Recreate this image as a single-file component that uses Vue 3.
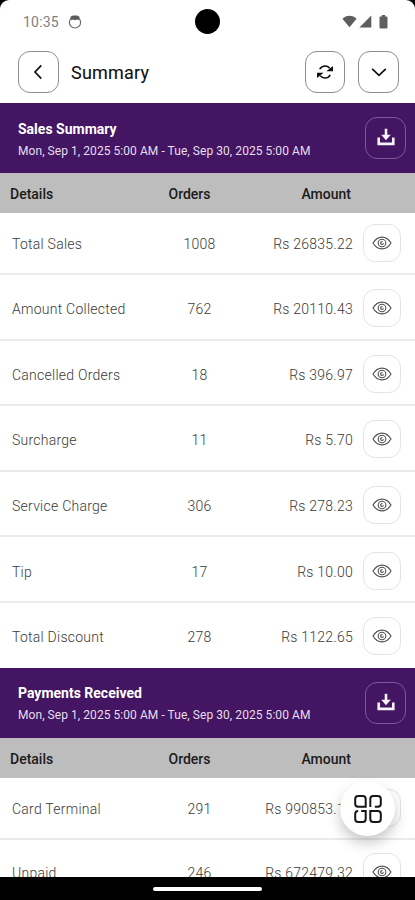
<script setup>
const period = 'Mon, Sep 1, 2025 5:00 AM - Tue, Sep 30, 2025 5:00 AM'

const sections = [
  {
    title: 'Sales Summary',
    rows: [
      { label: 'Total Sales', orders: 1008, amount: 'Rs 26835.22' },
      { label: 'Amount Collected', orders: 762, amount: 'Rs 20110.43' },
      { label: 'Cancelled Orders', orders: 18, amount: 'Rs 396.97' },
      { label: 'Surcharge', orders: 11, amount: 'Rs 5.70' },
      { label: 'Service Charge', orders: 306, amount: 'Rs 278.23' },
      { label: 'Tip', orders: 17, amount: 'Rs 10.00' },
      { label: 'Total Discount', orders: 278, amount: 'Rs 1122.65' },
    ],
  },
  {
    title: 'Payments Received',
    rows: [
      { label: 'Card Terminal', orders: 291, amount: 'Rs 990853.12' },
      { label: 'Unpaid', orders: 246, amount: 'Rs 672479.32' },
    ],
  },
]
</script>

<template>
  <div class="phone">
    <div class="screen">
      <!-- status bar -->
      <div class="status-bar">
        <span class="time">10:35</span>
        <svg class="app-icon" width="14" height="14" viewBox="0 0 14 14">
          <circle cx="7" cy="7.4" r="5.6" fill="none" stroke="#6a6a6a" stroke-width="1.2" />
          <path d="M2.400 1.800 5 .5h4l2.600 1.300-.9 3.400L9 4.400l-2 .9-2-.9-1.700.8z" fill="#5c5c5c" />
        </svg>
        <div class="status-right">
          <svg width="15" height="13" viewBox="0 0 15 13">
            <path d="M7.500 12.300.4 3.700C2.300 1.700 4.700.7 7.500.7s5.200 1 7.100 3z" fill="#5e5e5e" />
          </svg>
          <svg width="13" height="13" viewBox="0 0 13 13">
            <path d="M12.300.6v11.800H.4z" fill="#5e5e5e" />
          </svg>
          <svg width="9" height="14" viewBox="0 0 9 14">
            <path d="M2.800 0h3.400v1.500h1.400q.9 0 .9.900v10.200q0 .9-.9.900H1.400q-.9 0-.9-.9V2.400q0-.9.900-.9h1.400z" fill="#5e5e5e" />
          </svg>
        </div>
        <div class="camera"></div>
      </div>

      <!-- app bar -->
      <div class="app-bar">
        <button class="square-btn">
          <svg width="24" height="24" viewBox="0 0 24 24" class="line-icon">
            <path d="M14.300 5.300 8 12l6.300 6.700" />
          </svg>
        </button>
        <h1 class="page-title">Summary</h1>
        <button class="square-btn refresh">
          <svg width="20" height="20" viewBox="0 0 20 20">
            <path d="M4.700 7.200C5.900 5.100 7.800 4 10.100 4c1.900 0 3.500.8 4.600 2.200M15.300 12.800c-1.200 2.100-3.100 3.200-5.400 3.200-1.900 0-3.500-.8-4.600-2.200" fill="none" stroke="#0c0c0c" stroke-width="1.500" />
            <path d="M18 4v5.200h-6.600zM2 16v-5.200h6.600z" fill="#0c0c0c" />
          </svg>
        </button>
        <button class="square-btn">
          <svg width="24" height="24" viewBox="0 0 24 24" class="line-icon">
            <path d="M5.200 8.900 12 15.300l6.800-6.400" />
          </svg>
        </button>
      </div>

      <!-- report -->
      <main class="report">
        <section v-for="section in sections" :key="section.title">
          <div class="banner">
            <div class="banner-text">
              <h2 class="banner-title">{{ section.title }}</h2>
              <p class="banner-period">{{ period }}</p>
            </div>
            <button class="square-btn download">
              <svg width="20" height="20" viewBox="0 0 20 20">
                <path d="M2.700 9.600v6.300h14.600V9.600" fill="none" stroke="#f6f2fa" stroke-width="2.600" />
                <path d="M10 .8v7" stroke="#f6f2fa" stroke-width="2.600" />
                <path d="M5.200 6.800h9.600L10 12.200z" fill="#f6f2fa" />
              </svg>
            </button>
          </div>

          <div class="table-head">
            <span>Details</span>
            <span class="orders">Orders</span>
            <span class="amount">Amount</span>
          </div>

          <div v-for="row in section.rows" :key="row.label" class="table-row">
            <span class="label">{{ row.label }}</span>
            <span class="orders">{{ row.orders }}</span>
            <span class="amount">{{ row.amount }}</span>
            <button class="eye-btn">
              <svg width="20" height="14" viewBox="0 0 20 14">
                <path d="M1 7C3.200 3.300 6.300 1.100 10 1.100S16.800 3.300 19 7c-2.200 3.700-5.300 5.900-9 5.900S3.200 10.700 1 7z" />
                <circle cx="10" cy="7" r="3.800" />
                <path d="M10.500 5.600c-1.300-.1-1.900.6-1.900 1.400s.6 1.400 1.400 1.400 1.400-.5 1.400-1.200" />
              </svg>
            </button>
          </div>
        </section>
      </main>

      <button class="fab">
        <svg width="30" height="30" viewBox="0 0 30 30">
          <path d="M5.200 2h4.500q3 0 3 3v7.700H5.200q-3 0-3-3V5q0-3 3-3z" />
          <path d="M17.300 13V5q0-3 3-3h4.500q3 0 3 3v4.700q0 3-3 3h-3" />
          <path d="M8.200 17h4.500v8q0 3-3 3H5.200q-3 0-3-3v-5q0-3 3-3" />
          <path d="M17.300 17h7.500q3 0 3 3v5q0 3-3 3h-4.500q-3 0-3-3z" />
        </svg>
      </button>
    </div>

    <div class="nav-bar">
      <div class="nav-handle"></div>
    </div>
  </div>
</template>

<style>
body {
  background: #000;
}
</style>

<style scoped>
.phone {
  height: 900px;
  width: 415px;
  display: flex;
  flex-direction: column;
  background: #000;
  font-family: Roboto, 'Liberation Sans', sans-serif;
  overflow: hidden;
}

.screen {
  position: relative;
  height: 877px;
  display: flex;
  flex-direction: column;
  background: #fff;
  border-radius: 9px 9px 0 0;
  overflow: hidden;
}

h1,
h2,
p {
  margin: 0;
}

button {
  padding: 0;
  background: none;
  border: none;
  display: flex;
  align-items: center;
  justify-content: center;
  flex-shrink: 0;
}

/* status bar */
.status-bar {
  position: relative;
  height: 43px;
  padding: 0 27px 0 23px;
  display: flex;
  align-items: center;
  flex-shrink: 0;
}

.time {
  font-size: 14px;
  letter-spacing: 0.2px;
  color: #808080;
}

.app-icon {
  margin-left: 9px;
}

.status-right {
  margin-left: auto;
  display: flex;
  align-items: center;
  gap: 2px;
}

.status-right svg:last-child {
  margin-left: 5px;
}

.camera {
  position: absolute;
  left: 195px;
  top: 9px;
  width: 25px;
  height: 25px;
  border-radius: 50%;
  background: #000;
}

/* app bar */
.app-bar {
  height: 60px;
  padding: 0 16px 2px 18px;
  box-sizing: border-box;
  display: flex;
  align-items: center;
  flex-shrink: 0;
}

.square-btn {
  width: 41px;
  height: 42px;
  box-sizing: border-box;
  border: 1px solid #8d8b94;
  border-radius: 12px;
}

.line-icon {
  fill: none;
  stroke: #111;
  stroke-width: 1.7;
}

.page-title {
  margin-left: 12px;
  font-size: 18px;
  font-weight: 400;
  letter-spacing: 0.2px;
  color: #111;
  -webkit-text-stroke: 0.1px #111;
}

.refresh {
  width: 40px;
  margin-left: auto;
  margin-right: 13px;
}

/* report */
.report {
  flex: 1;
  min-height: 0;
  overflow: hidden;
}

.banner {
  height: 70px;
  padding: 0 9px 0 18px;
  display: flex;
  align-items: center;
  justify-content: space-between;
  background: #431562;
}

.banner-text {
  padding-top: 3px;
}

.banner-title {
  font-size: 14px;
  line-height: 20px;
  font-weight: 700;
  color: #fff;
}

.banner-period {
  margin-top: 2px;
  font-size: 12px;
  line-height: 20px;
  letter-spacing: 0.06px;
  color: #e6dfec;
}

.download {
  border-color: #7c5a96;
}

.table-head {
  height: 40px;
  padding: 2px 64px 0 10px;
  box-sizing: border-box;
  display: grid;
  grid-template-columns: 130px 99px 1fr;
  align-items: center;
  background: #bdbdbd;
  font-size: 14px;
  font-weight: 500;
  color: #1b1b1b;
}

.orders {
  text-align: center;
}

.amount {
  text-align: right;
}

.table-row {
  height: 65.6px;
  padding: 3px 14px 0 12px;
  box-sizing: border-box;
  display: grid;
  grid-template-columns: 138px 99px 1fr 48px;
  align-items: center;
  border-bottom: 2px solid #ebebeb;
  font-size: 14px;
  font-weight: 300;
  letter-spacing: 0.25px;
  color: #3a3a3a;
}

.table-row span {
  padding-top: 2px;
}

.table-head + .table-row {
  height: 62px;
  padding-top: 0;
}

.table-row:last-child {
  height: 64.6px;
  border-bottom-color: #fff;
}

.eye-btn {
  justify-self: end;
  width: 38px;
  height: 38px;
  box-sizing: border-box;
  border: 1px solid #e4e4e4;
  border-radius: 12px;
}

.eye-btn svg {
  fill: none;
  stroke: #505050;
  stroke-width: 1.1;
}

/* floating menu */
.fab {
  position: absolute;
  left: 340px;
  top: 781px;
  width: 55px;
  height: 55px;
  border-radius: 50%;
  background: #fff;
  box-shadow: 0 7px 14px rgba(0, 0, 0, 0.22);
}

.fab svg {
  fill: none;
  stroke: #161616;
  stroke-width: 2;
}

/* system navigation */
.nav-bar {
  height: 23px;
  display: flex;
  align-items: center;
  justify-content: center;
}

.nav-handle {
  width: 109px;
  height: 4px;
  border-radius: 2px;
  background: #fff;
}
</style>
